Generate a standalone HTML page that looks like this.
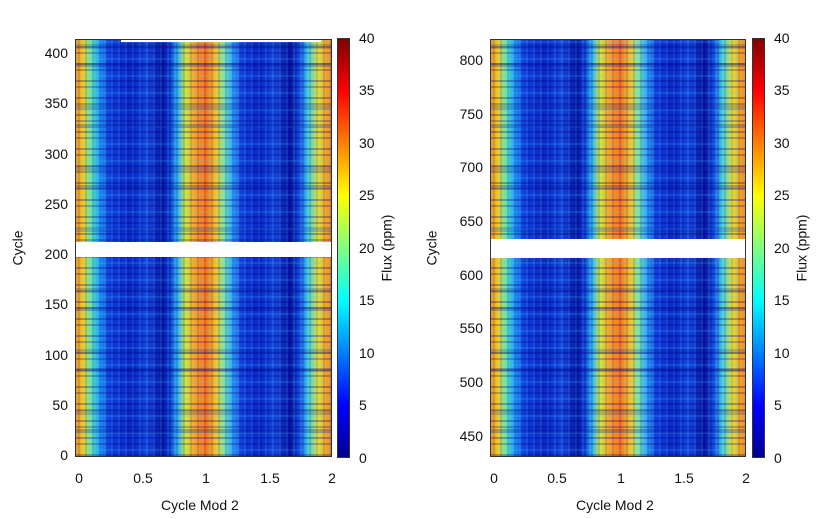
<!DOCTYPE html>
<html><head><meta charset="utf-8"><style>
body{margin:0;width:830px;height:519px;background:#fff;position:relative;overflow:hidden;font-family:"Liberation Sans",sans-serif;color:#111}
.p{position:absolute;top:39px;height:418px;border:1px solid #333;box-sizing:border-box;overflow:hidden}
.base{position:absolute;inset:0;background:linear-gradient(90deg,#ff9010 0%,#f0d020 3%,#60e8b0 6%,#20a0f8 9%,#1040e0 13%,#0a28c8 22%,#1448e0 28%,#0618a8 34%,#1040d8 37%,#30b8f0 40%,#d8e830 43%,#ff9a20 47%,#ff7018 51%,#f8c820 55%,#80e8a0 58%,#30a8f8 61%,#1040e0 65%,#0a28c8 72%,#1448e0 78%,#0614a0 84%,#1650e8 88%,#40d0e0 91%,#e8e030 95%,#ff8018 100%)}
.rows{position:absolute;inset:0;background:
repeating-linear-gradient(0deg,rgba(0,0,140,.3) 0 2px,rgba(0,0,0,0) 2px 5px,rgba(60,210,255,.16) 5px 7px,rgba(0,0,0,0) 7px 11px,rgba(0,0,130,.25) 11px 13px,rgba(0,0,0,0) 13px 17px),
repeating-linear-gradient(90deg,rgba(120,220,255,.12) 0 2px,rgba(0,0,80,.12) 2px 4px,rgba(0,0,0,0) 4px 7px);}
.rows2{position:absolute;inset:0;background:repeating-linear-gradient(0deg,rgba(0,0,0,0) 0 23px,rgba(0,0,140,.25) 23px 27px,rgba(0,0,0,0) 27px 41px,rgba(0,20,150,.2) 41px 46px,rgba(0,0,0,0) 46px 61px)}
.gap{position:absolute;left:0;right:0;background:#fff}
.cb{position:absolute;top:38px;height:420px;width:13px;border:1px solid #333;box-sizing:border-box;background:linear-gradient(0deg,#00008f 0%,#0000ff 12.5%,#0080ff 25%,#00ffff 37.5%,#80ff80 50%,#ffff00 62.5%,#ff8000 75%,#ff0000 87.5%,#800000 100%)}
.t{position:absolute;font-size:14px;line-height:14px}
.r{text-align:right;width:40px}
.c{text-align:center;width:40px}
.yl{position:absolute;font-size:14px;transform:rotate(-90deg);transform-origin:center;white-space:nowrap}
</style></head><body>
<div class="p" style="left:75px;width:257px"><div class="base"></div><div class="rows"></div><div class="rows2"></div>
<div class="gap" style="top:202px;height:15px"></div><div class="gap" style="top:0;height:2px;left:45px;right:10px"></div></div>
<div class="cb" style="left:337px"></div>
<div class="p" style="left:490px;width:256px"><div class="base"></div><div class="rows"></div><div class="rows2"></div>
<div class="gap" style="top:199px;height:19px"></div></div>
<div class="cb" style="left:752px"></div>

<div class="t r" style="left:28px;top:448px">0</div>
<div class="t r" style="left:28px;top:398px">50</div>
<div class="t r" style="left:28px;top:348px">100</div>
<div class="t r" style="left:28px;top:297px">150</div>
<div class="t r" style="left:28px;top:247px">200</div>
<div class="t r" style="left:28px;top:197px">250</div>
<div class="t r" style="left:28px;top:147px">300</div>
<div class="t r" style="left:28px;top:96px">350</div>
<div class="t r" style="left:28px;top:46px">400</div>
<div class="yl" style="left:0px;top:240px">Cycle</div>
<div class="t c" style="left:59px;top:471px">0</div>
<div class="t c" style="left:123px;top:471px">0.5</div>
<div class="t c" style="left:186px;top:471px">1</div>
<div class="t c" style="left:250px;top:471px">1.5</div>
<div class="t c" style="left:312px;top:471px">2</div>
<div class="t" style="left:161px;top:498px">Cycle Mod 2</div>

<div class="t" style="left:359px;top:451px">0</div>
<div class="t" style="left:359px;top:398px">5</div>
<div class="t" style="left:359px;top:346px">10</div>
<div class="t" style="left:359px;top:293px">15</div>
<div class="t" style="left:359px;top:241px">20</div>
<div class="t" style="left:359px;top:188px">25</div>
<div class="t" style="left:359px;top:136px">30</div>
<div class="t" style="left:359px;top:83px">35</div>
<div class="t" style="left:359px;top:31px">40</div>
<div class="yl" style="left:353px;top:240px">Flux (ppm)</div>

<div class="t r" style="left:443px;top:429px">450</div>
<div class="t r" style="left:443px;top:375px">500</div>
<div class="t r" style="left:443px;top:321px">550</div>
<div class="t r" style="left:443px;top:268px">600</div>
<div class="t r" style="left:443px;top:214px">650</div>
<div class="t r" style="left:443px;top:160px">700</div>
<div class="t r" style="left:443px;top:107px">750</div>
<div class="t r" style="left:443px;top:53px">800</div>
<div class="yl" style="left:414px;top:240px">Cycle</div>
<div class="t c" style="left:474px;top:471px">0</div>
<div class="t c" style="left:537px;top:471px">0.5</div>
<div class="t c" style="left:601px;top:471px">1</div>
<div class="t c" style="left:664px;top:471px">1.5</div>
<div class="t c" style="left:726px;top:471px">2</div>
<div class="t" style="left:576px;top:498px">Cycle Mod 2</div>

<div class="t" style="left:774px;top:451px">0</div>
<div class="t" style="left:774px;top:398px">5</div>
<div class="t" style="left:774px;top:346px">10</div>
<div class="t" style="left:774px;top:293px">15</div>
<div class="t" style="left:774px;top:241px">20</div>
<div class="t" style="left:774px;top:188px">25</div>
<div class="t" style="left:774px;top:136px">30</div>
<div class="t" style="left:774px;top:83px">35</div>
<div class="t" style="left:774px;top:31px">40</div>
<div class="yl" style="left:768px;top:240px">Flux (ppm)</div>
</body></html>
